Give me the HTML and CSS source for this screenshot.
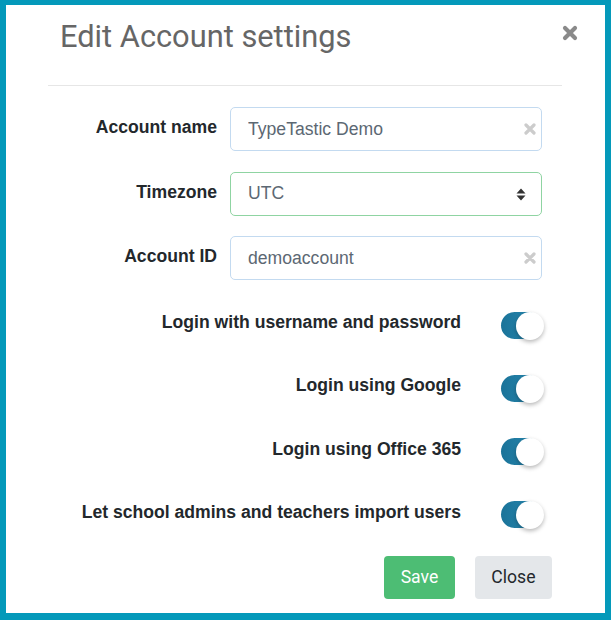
FILE: index.html
```html
<!DOCTYPE html>
<html lang="en">

<head>
    <meta charset="UTF-8">
    <title>Edit Account settings</title>
    <link rel="stylesheet" href="styles.css">
</head>

<body>
    <div class="modal">
        <div class="modal-head">
            <h2 class="modal-title">Edit Account settings</h2>
        </div>
        <button class="close-btn" type="button">
            <svg width="16" height="16" viewBox="0 0 16 16">
                <path d="M3 3 L13 13 M13 3 L3 13" stroke="#8a8a8a" stroke-width="4.2" stroke-linecap="round" />
            </svg>
        </button>

        <form class="modal-body">
            <div class="field">
                <label>Account name</label>
                <div class="input-wrap">
                    <input class="inp" type="text" value="TypeTastic Demo">
                    <svg class="clear" width="12" height="12" viewBox="0 0 12 12">
                        <path d="M2 2 L10 10 M10 2 L2 10" stroke="#cccccc" stroke-width="3.2" stroke-linecap="round" />
                    </svg>
                </div>
            </div>

            <div class="field">
                <label>Timezone</label>
                <div class="inp sel">
                    <span>UTC</span>
                    <svg width="10" height="13" viewBox="0 0 10 13">
                        <path d="M5 0.5 L9.5 5.5 L0.5 5.5 Z M0.5 7.5 L9.5 7.5 L5 12.5 Z" fill="#333" />
                    </svg>
                </div>
            </div>

            <div class="field">
                <label>Account ID</label>
                <div class="input-wrap">
                    <input class="inp" type="text" value="demoaccount">
                    <svg class="clear" width="12" height="12" viewBox="0 0 12 12">
                        <path d="M2 2 L10 10 M10 2 L2 10" stroke="#cccccc" stroke-width="3.2" stroke-linecap="round" />
                    </svg>
                </div>
            </div>

            <div class="toggles">
                <div class="toggle-row">
                    <span>Login with username and password</span>
                    <span class="switch"></span>
                </div>
                <div class="toggle-row">
                    <span>Login using Google</span>
                    <span class="switch"></span>
                </div>
                <div class="toggle-row">
                    <span>Login using Office 365</span>
                    <span class="switch"></span>
                </div>
                <div class="toggle-row">
                    <span>Let school admins and teachers import users</span>
                    <span class="switch"></span>
                </div>
            </div>

            <div class="modal-foot">
                <button class="btn save" type="submit">Save</button>
                <button class="btn close" type="button">Close</button>
            </div>
        </form>
    </div>
</body>

</html>
```

FILE: styles.css
```css
body {
    margin: 0;
    font-family: "Liberation Sans", Arial, sans-serif;
}

.modal {
    position: relative;
    height: 620px;
    box-sizing: border-box;
    background-color: #fff;
    border-style: solid;
    border-color: #0499ba;
    border-width: 5px 6px 7px 6px;
}

.modal-head {
    margin: 0 43px 0 42px;
    padding: 13px 0 30px 12px;
    border-bottom: 1px solid #e6e6e6;
}

.modal-title {
    margin: 0;
    font-family: Roboto, sans-serif;
    font-weight: 400;
    font-size: 30.8px;
    line-height: 37px;
    color: #666;
}

.close-btn {
    position: absolute;
    top: 20px;
    right: 27px;
    padding: 0;
    border: 0;
    background: none;
    line-height: 0;
    cursor: pointer;
}

.modal-body {
    margin: 0 0 0 42px;
    padding-top: 21px;
    width: 494px;
    display: flex;
    flex-direction: column;
    gap: 20.5px;
}

.field {
    display: grid;
    grid-template-columns: 169px 312px;
    column-gap: 13px;
    align-items: center;
    height: 44px;
}

.field label,
.toggle-row span {
    text-align: right;
    font-weight: bold;
    font-size: 17.6px;
    color: #23282c;
}

.field label {
    margin-top: -3px;
}

.input-wrap {
    position: relative;
}

.inp {
    box-sizing: border-box;
    width: 312px;
    height: 44px;
    padding: 0 17px;
    border: 1px solid #c3daf0;
    border-radius: 5px;
    font-family: "Liberation Sans", Arial, sans-serif;
    font-size: 17.6px;
    color: #5c6873;
    background-color: #fff;
    outline: none;
}

.clear {
    position: absolute;
    right: 6px;
    top: 16px;
}

.sel {
    display: flex;
    align-items: center;
    justify-content: space-between;
    border-color: #8fd4a2;
    padding-right: 15px;
}

.sel svg {
    margin-top: 1px;
}

.toggles {
    display: flex;
    flex-direction: column;
    gap: 19.3px;
}

.toggle-row {
    display: flex;
    justify-content: flex-end;
    align-items: center;
    gap: 40px;
    height: 44px;
}

.switch {
    position: relative;
    width: 40px;
    height: 27px;
    margin-right: 1px;
    margin-top: 5px;
    border-radius: 14px;
    background: linear-gradient(90deg, #1a7399, #2b8ab2);
}

.switch::after {
    content: "";
    position: absolute;
    right: -3px;
    top: 0;
    width: 28px;
    height: 28px;
    border-radius: 50%;
    background-color: #fff;
    box-shadow: 0 2px 4px rgba(0, 0, 0, 0.28);
}

.modal-foot {
    display: flex;
    justify-content: flex-end;
    gap: 20px;
    margin-right: -10px;
    margin-top: 0.7px;
}

.btn {
    height: 43px;
    padding: 0 16.5px;
    border: 0;
    border-radius: 4px;
    font-family: Roboto, sans-serif;
    font-size: 17.6px;
    cursor: pointer;
}

.save {
    background-color: #4dbd74;
    color: #fff;
}

.close {
    background-color: #e4e7ea;
    color: #23282c;
}
```
